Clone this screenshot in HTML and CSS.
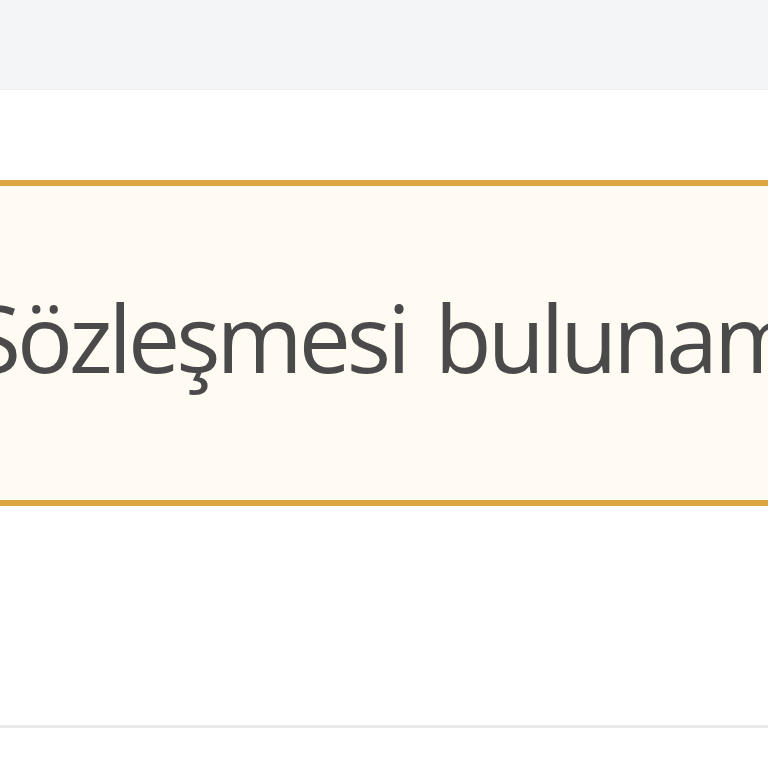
FILE: index.html
```html
<!DOCTYPE html>
<html>

<head>
    <meta charset="utf-8">
    <link rel="stylesheet" href="styles.css">
</head>

<body>
    <div class="topbar"></div>
    <div class="content">
        <div class="alert">
            <span class="alert-text">Sözleşmesi bulunamadı</span>
        </div>
    </div>
    <div class="divider"></div>
</body>

</html>
```
FILE: styles.css
```css
body {
    margin: 0;
    overflow: hidden;
    background-color: white;
    font-family: "Open Sans", "Noto Sans", sans-serif;
}

/* grey strip along the top */
.topbar {
    height: 89px;
    background-color: #f4f5f6;
    border-bottom: 1px solid #eff1f2;
}

.content {
    padding-top: 90px;
    height: 545px;
}

/* warning box, wider than the window on both sides */
.alert {
    margin-left: -60px;
    margin-right: -60px;
    border: 6px solid #dba63f;
    background-color: #fffaf2;
    padding-top: 105px;
    padding-bottom: 116px;
    white-space: nowrap;
    overflow: hidden;
}

.alert-text {
    display: block;
    margin-left: 24px;
    font-size: 93px;
    line-height: 1;
    letter-spacing: -4px;
    word-spacing: 8px;
    color: #4a4a4a;
}

.divider {
    height: 3px;
    background-color: #e9e9e9;
}
```
